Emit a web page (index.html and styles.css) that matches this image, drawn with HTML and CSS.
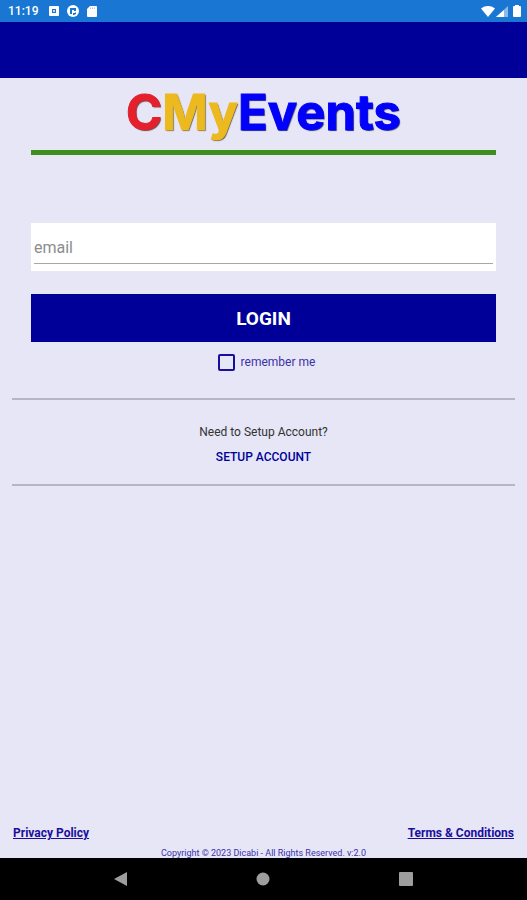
FILE: index.html
```html
<!DOCTYPE html>
<html lang="en">
<head>
    <meta charset="UTF-8">
    <meta name="viewport" content="width=device-width, initial-scale=1.0">
    <title>CMyEvents</title>
    <link rel="stylesheet" href="styles.css">
</head>
<body>
    <div class="status-bar">
        <div class="status-left">
            <span class="clock">11:19</span>
            <svg width="10" height="10" viewBox="0 0 10 10">
                <rect width="10" height="10" rx="1" fill="#fff"/>
                <path fill="#1976d2" d="M3 3h4v4H3z"/>
                <circle cx="5" cy="5" r="1" fill="#fff"/>
            </svg>
            <svg width="12" height="12" viewBox="0 0 12 12">
                <circle cx="6" cy="6" r="6" fill="#fff"/>
                <path fill="#1976d2" d="M3 3h6v3H7V5H5v4H3z"/>
                <path fill="#1976d2" d="M6 8h2l1-1v2l-2 1H6z"/>
            </svg>
            <svg width="10" height="11" viewBox="0 0 10 11">
                <path fill="#fff" d="M3 0h6a1 1 0 0 1 1 1v9a1 1 0 0 1-1 1H1a1 1 0 0 1-1-1V3z"/>
                <path stroke="#1976d2" stroke-width=".4" d="M3.5 1.5v1.5M5.5 1.5v1.5M7.5 1.5v1.5"/>
            </svg>
        </div>
        <div class="status-right">
            <svg width="14" height="11" viewBox="0 0 14 11">
                <path fill="#fff" d="M0 2.5C4-.8 10-.8 14 2.5L7 11z"/>
            </svg>
            <svg width="12" height="11" viewBox="0 0 12 11">
                <path fill="#fff" d="M12 0v11H0z" opacity=".5"/>
                <path fill="#fff" d="M8 4v7H0z"/>
            </svg>
            <svg class="battery" width="8" height="12" viewBox="0 0 8 12">
                <path fill="#fff" d="M2 0h4v1h1a1 1 0 0 1 1 1v9a1 1 0 0 1-1 1H1a1 1 0 0 1-1-1V2a1 1 0 0 1 1-1h1z"/>
            </svg>
        </div>
    </div>

    <header class="app-bar"></header>

    <main class="content">
        <h1 class="logo"><span class="logo-c">C</span><span class="logo-my">My</span><span class="logo-events">Events</span></h1>

        <form class="login-form">
            <div class="email-box">
                <input type="email" id="email" name="email" placeholder="email" aria-label="email">
            </div>
            <button type="submit" class="login-btn">LOGIN</button>
            <div class="remember">
                <input type="checkbox" id="remember" name="remember">
                <label for="remember">remember me</label>
            </div>
        </form>

        <section class="setup">
            <p>Need to Setup Account?</p>
            <a href="#">SETUP ACCOUNT</a>
        </section>
    </main>

    <footer class="footer">
        <div class="footer-links">
            <a href="#">Privacy Policy</a>
            <a href="#">Terms &amp; Conditions</a>
        </div>
        <p class="copyright">Copyright © 2023 Dicabi - All Rights Reserved. v:2.0</p>
    </footer>

    <nav class="nav-bar">
        <button type="button" aria-label="Back">
            <svg width="14" height="14" viewBox="0 0 14 14"><path fill="#9e9e9e" d="M13 0v14L0 7z"/></svg>
        </button>
        <button type="button" aria-label="Home">
            <svg width="14" height="14" viewBox="0 0 14 14"><circle cx="7" cy="7" r="6.5" fill="#9e9e9e"/></svg>
        </button>
        <button type="button" aria-label="Recent apps">
            <svg width="14" height="14" viewBox="0 0 14 14"><rect width="14" height="14" rx="1" fill="#9e9e9e"/></svg>
        </button>
    </nav>
</body>
</html>
```

FILE: styles.css
```css
* {
    margin: 0;
    padding: 0;
    box-sizing: border-box;
}

body {
    font-family: Roboto, "Liberation Sans", sans-serif;
    background: #e6e6f6;
    color: #333;
    min-height: 100vh;
    display: flex;
    flex-direction: column;
}

svg {
    display: block;
}

.status-bar {
    background: #1976d2;
    color: #fff;
    height: 22px;
    padding: 0 6px 0 8px;
    display: flex;
    align-items: center;
    justify-content: space-between;
}

.status-left {
    display: flex;
    align-items: center;
    gap: 8px;
}

.status-right {
    display: flex;
    align-items: center;
    gap: 1px;
}

.clock {
    font-size: 12px;
    font-weight: 500;
    margin-right: 3px;
}

.battery {
    margin-left: 4px;
}

.app-bar {
    background: #000099;
    height: 56px;
}

.content {
    flex: 1;
    padding: 0 12px;
}

.logo {
    margin: 0 19px 68px;
    height: 77px;
    border-bottom: 5px solid #3f8f1f;
    font-family: Inter, "Open Sans", sans-serif;
    font-size: 49px;
    font-weight: 700;
    line-height: 70px;
    text-align: center;
    text-shadow: 1px 1px 1px #555;
    -webkit-text-stroke-width: 1px;
}

.logo-c {
    color: #e3202c;
}

.logo-my {
    color: #ecb91f;
}

.logo-events {
    color: #0000fb;
}

.login-form {
    margin: 0 19px;
}

.email-box {
    background: #fff;
    height: 48px;
    padding: 8px 3px 7px;
    margin-bottom: 23px;
}

.email-box input {
    display: block;
    width: 100%;
    height: 33px;
    border: none;
    border-bottom: 1px solid #a8a8a8;
    background: transparent;
    font-family: inherit;
    font-size: 16px;
    color: #333;
    outline: none;
}

.email-box input::placeholder {
    color: #8c8c8c;
}

.login-btn {
    display: block;
    width: 100%;
    height: 48px;
    border: none;
    background: #000099;
    color: #fff;
    font-family: inherit;
    font-size: 19px;
    font-weight: 700;
    cursor: pointer;
}

.remember {
    display: flex;
    align-items: center;
    justify-content: center;
    gap: 6px;
    height: 40px;
    padding-left: 6px;
    color: #3d32a8;
    font-size: 12px;
}

.remember input {
    appearance: none;
    width: 17px;
    height: 17px;
    border: 2px solid #1a0f9c;
    border-radius: 2px;
}

.remember input:checked {
    background: #1a0f9c;
}

.setup {
    margin-top: 16px;
    height: 88px;
    border-top: 2px solid #b5b5c6;
    border-bottom: 2px solid #b5b5c6;
    padding-top: 23px;
    text-align: center;
    font-size: 12px;
    line-height: 18px;
}

.setup p {
    margin-bottom: 7px;
}

.setup a {
    display: inline-block;
    color: #000099;
    font-weight: 500;
    text-decoration: none;
}

.footer {
    padding: 0 13px;
    color: #3d32a8;
}

.footer-links {
    display: flex;
    justify-content: space-between;
    font-size: 12px;
    line-height: 18px;
    margin-bottom: 6px;
}

.footer-links a {
    color: #1a0f9c;
    font-weight: 700;
}

.copyright {
    font-size: 9px;
    line-height: 10px;
    text-align: center;
}

.nav-bar {
    background: #000;
    height: 42px;
    padding: 0 50px;
    display: flex;
    align-items: center;
}

.nav-bar button {
    flex: 1;
    height: 42px;
    border: none;
    background: transparent;
    display: flex;
    align-items: center;
    justify-content: center;
}
```
